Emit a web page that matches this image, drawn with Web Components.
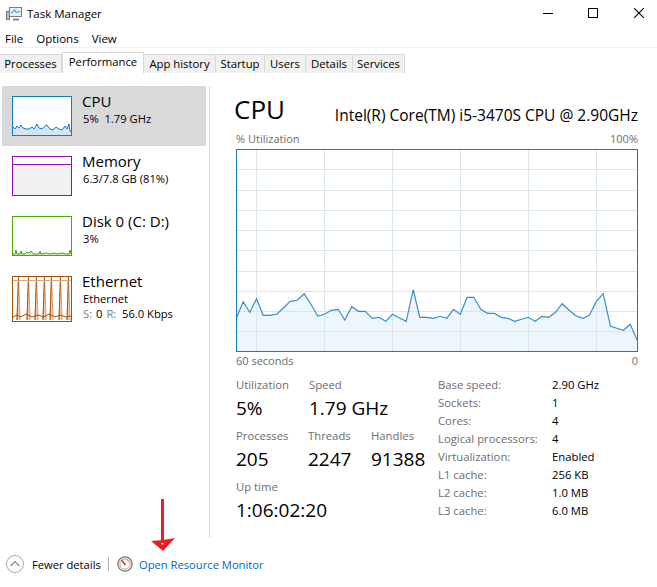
<!DOCTYPE html>
<html>
<head>
<meta charset="utf-8">
<title>Task Manager</title>
<style>
  html, body { margin: 0; background: #fff; }
  body { font-family: "Open Sans", "Noto Sans", sans-serif; font-size: 12px; color: #000; }
</style>
</head>
<body>
<task-manager></task-manager>
<script>
class TitleBar extends HTMLElement {
  constructor() {
    super();
    this.attachShadow({ mode: "open" });
    this.shadowRoot.innerHTML = `
      <style>
        :host { display: flex; align-items: center; height: 30px; padding-left: 6px; }
        svg { display: block; }
        .title { margin-left: 5px; font-size: 11.5px; flex: 1; margin-top: -4px; }
        .btns { display: flex; align-self: flex-start; gap: 36px; padding-right: 13px; }
        .btn { width: 10px; height: 26px; display: flex; align-items: center; justify-content: center; }
        .btn:first-child { margin-right: -1px; }
        .app { margin-top: -2px; }
      </style>
      <svg class="app" width="16" height="16" viewBox="0 0 16 16">
        <rect x="0.5" y="5.5" width="3" height="8" fill="#bcbcbc" stroke="#777"/>
        <rect x="3.5" y="1.5" width="12" height="9" fill="#e4f0f8" stroke="#70808c"/>
        <path d="M5 7l2-1 1.5-2.5L10.5 7l1.5-1.5L14 6" fill="none" stroke="#2f8fc8"/>
        <path d="M7 13.5h6" stroke="#888" stroke-width="2"/>
      </svg>
      <div class="title">Task Manager</div>
      <div class="btns">
        <div class="btn"><svg width="10" height="10"><path d="M0 5.5h10" stroke="#000"/></svg></div>
        <div class="btn"><svg width="10" height="10"><rect x="0.5" y="0.5" width="9" height="9" fill="none" stroke="#000"/></svg></div>
        <div class="btn"><svg width="10" height="10"><path d="M0 0l10 10M10 0L0 10" stroke="#000" stroke-width="1.1"/></svg></div>
      </div>
    `;
  }
}

class MenuBar extends HTMLElement {
  constructor() {
    super();
    this.attachShadow({ mode: "open" });
    this.shadowRoot.innerHTML = `
      <style>
        :host { display: flex; height: 17px; padding-left: 5px; gap: 13px; line-height: 17px; font-size: 11.5px; border-bottom: 1px solid #f0f0f0; }
      </style>
      <span>File</span><span>Options</span><span>View</span>
    `;
  }
}

class TabStrip extends HTMLElement {
  constructor() {
    super();
    this.attachShadow({ mode: "open" });
    const tabs = [
      ["Processes", 62], ["Performance", 82], ["App history", 72], ["Startup", 49],
      ["Users", 41], ["Details", 47], ["Services", 52],
    ];
    const html = tabs.map(([name, w]) =>
      `<div class="tab${name === "Performance" ? " on" : ""}" style="width:${w}px">${name}</div>`).join("");
    this.shadowRoot.innerHTML = `
      <style>
        :host { display: flex; align-items: flex-end; height: 25px; }
        .tab { box-sizing: border-box; height: 19px; line-height: 17px; text-align: center; background: #f0f0f0; border: 1px solid #d9d9d9; border-left: 0; border-bottom: 0; font-size: 11.3px; }
        .tab.on { background: #fff; height: 21px; line-height: 18px; border-left: 1px solid #d9d9d9; }
      </style>
      ${html}
    `;
  }
}

class PerfItem extends HTMLElement {
  constructor() {
    super();
    this.attachShadow({ mode: "open" });
    this.shadowRoot.innerHTML = `
      <style>
        :host { display: flex; box-sizing: border-box; height: 60px; padding: 10px 0 0 10px; gap: 10px; }
        :host([selected]) { background: #d9d9d9; }
        .text { margin-top: -4px; }
        .name { font-size: 15px; line-height: 18px; }
        .sub { font-size: 11.2px; line-height: 15px; margin-top: 1px; padding-left: 1px; }
      </style>
      <slot name="thumb"></slot>
      <div class="text">
        <div class="name"><slot name="name"></slot></div>
        <div class="sub"><slot></slot></div>
      </div>
    `;
  }
}

class SparkThumb extends HTMLElement {
  constructor() {
    super();
    this.attachShadow({ mode: "open" });
  }
  connectedCallback() {
    const color = this.getAttribute("color");
    const h = Number(this.getAttribute("h") || 40);
    const pts = this.getAttribute("points") || "";
    const fill = this.getAttribute("fill") || "#fff";
    const shade = this.getAttribute("shade") || "none";
    const extra = this.getAttribute("extra") || "";
    const area = pts ? `<polygon points="0,${h} ${pts} 60,${h}" fill="${shade}"/><polyline points="${pts}" fill="none" stroke="${color}" stroke-width="1"/>` : "";
    this.shadowRoot.innerHTML = `
      <style>
        :host { display: block; width: 60px; height: ${h}px; flex: none; }
        svg { display: block; }
      </style>
      <svg width="60" height="${h}">
        <rect x="0" y="0" width="60" height="${h}" fill="${fill}"/>
        ${area}
        ${extra}
        <rect x="0.5" y="0.5" width="59" height="${h - 1}" fill="none" stroke="${color}"/>
      </svg>
    `;
  }
}

class CpuChart extends HTMLElement {
  constructor() {
    super();
    this.attachShadow({ mode: "open" });
    // sampled off the usage curve, in page pixels from the chart's top left
    const raw = [35,113,55,65,75,97,95,56,115,106,135,106,156,103,176,83,196,64,217,61,238,41,258,72,279,108,299,103,319,91,340,88,360,120,381,80,401,94,421,94,442,115,462,112,483,124,503,103,523,113,544,124,565,29,585,112,605,112,626,115,646,109,666,115,686,88,706,103,727,52,747,52,768,88,788,100,808,100,829,112,849,115,870,124,890,118,910,112,931,124,951,109,972,112,992,97,1012,71,1033,91,1053,107,1074,115,1094,105,1114,65,1135,41,1157,139,1176,145,1196,151,1216,133,1237,181];
    const pts = [];
    for (let i = 0; i < raw.length; i += 2) {
      pts.push(((raw[i] - 35) / 3 + 0.5).toFixed(1) + "," + ((raw[i + 1]) / 3 + 280 - 149).toFixed(1));
    }
    let grid = "";
    for (let x = 20; x < 402; x += 68) grid += `<path d="M${x + 0.5} 0V203"/>`;
    for (let i = 1; i < 10; i++) {
      const y = Math.round(i * 20.27);
      grid += `<path d="M0 ${y + 0.5}H402"/>`;
    }
    this.shadowRoot.innerHTML = `
      <style>
        :host { display: block; width: 402px; height: 203px; }
        svg { display: block; }
      </style>
      <svg width="402" height="203">
        <g stroke="#d9e6f0" fill="none">${grid}</g>
        <polygon points="0,203 ${pts.join(" ")} 402,203" fill="#cfe3f3" fill-opacity="0.35"/>
        <polyline points="${pts.join(" ")}" fill="none" stroke="#3a8fc4" stroke-width="1.2"/>
        <rect x="0.5" y="0.5" width="401" height="202" fill="none" stroke="#117dbb"/>
      </svg>
    `;
  }
}

class StatBlock extends HTMLElement {
  constructor() {
    super();
    this.attachShadow({ mode: "open" });
    this.shadowRoot.innerHTML = `
      <style>
        :host { display: block; }
        .label { color: #6d6d6d; font-size: 11.3px; line-height: 16px; }
        .value { font-size: 19px; line-height: 30px; color: #000; white-space: nowrap; }
      </style>
      <div class="label">${this.getAttribute("label")}</div>
      <div class="value">${this.getAttribute("value")}</div>
    `;
  }
}

class SpecTable extends HTMLElement {
  constructor() {
    super();
    this.attachShadow({ mode: "open" });
    const rows = [
      ["Base speed:", "2.90 GHz"], ["Sockets:", "1"], ["Cores:", "4"], ["Logical processors:", "4"],
      ["Virtualization:", "Enabled"], ["L1 cache:", "256 KB"], ["L2 cache:", "1.0 MB"], ["L3 cache:", "6.0 MB"],
    ];
    this.shadowRoot.innerHTML = `
      <style>
        :host { display: grid; grid-template-columns: 114px auto; grid-auto-rows: 18px; line-height: 18px; font-size: 11.3px; }
        .k { color: #6d6d6d; white-space: nowrap; }
      </style>
      ${rows.map(([k, v]) => `<div class="k">${k}</div><div>${v}</div>`).join("")}
    `;
  }
}

class CpuPanel extends HTMLElement {
  constructor() {
    super();
    this.attachShadow({ mode: "open" });
    this.shadowRoot.innerHTML = `
      <style>
        :host { display: block; padding: 6px 19px 0 26px; width: 402px; }
        .head { display: flex; justify-content: space-between; align-items: flex-end; height: 38px; }
        .big { font-size: 26px; line-height: 38px; margin: 0 0 2px -2px; }
        .model { font-size: 15.5px; line-height: 22px; margin-bottom: 4px; white-space: nowrap; }
        .axis { display: flex; justify-content: space-between; color: #6d6d6d; font-size: 11px; height: 16px; line-height: 16px; }
        .head + .axis { margin-top: 1px; margin-bottom: 2px; }
        .axis.low { margin-top: 1px; margin-bottom: -1px; }
        .stats { display: flex; margin-top: 9px; }
        .left { width: 202px; flex: none; display: flex; flex-direction: column; gap: 5px; }
        .row { display: flex; }
        .row stat-block:nth-child(1) { width: 72px; }
        .row.first stat-block:nth-child(1) { width: 73px; }
        .row stat-block:nth-child(2) { width: 63px; }
        spec-table { margin-top: -1px; }
      </style>
      <div class="head"><div class="big">CPU</div><div class="model">Intel(R) Core(TM) i5-3470S CPU @ 2.90GHz</div></div>
      <div class="axis"><span>% Utilization</span><span>100%</span></div>
      <cpu-chart></cpu-chart>
      <div class="axis low"><span>60 seconds</span><span>0</span></div>
      <div class="stats">
        <div class="left">
          <div class="row first"><stat-block label="Utilization" value="5%"></stat-block><stat-block label="Speed" value="1.79 GHz"></stat-block></div>
          <div class="row"><stat-block label="Processes" value="205"></stat-block><stat-block label="Threads" value="2247"></stat-block><stat-block label="Handles" value="91388"></stat-block></div>
          <div class="row"><stat-block label="Up time" value="1:06:02:20"></stat-block></div>
        </div>
        <spec-table></spec-table>
      </div>
    `;
  }
}

class FooterBar extends HTMLElement {
  constructor() {
    super();
    this.attachShadow({ mode: "open" });
    this.shadowRoot.innerHTML = `
      <style>
        :host { display: flex; align-items: center; height: 28px; padding-left: 6px; font-size: 11.2px; }
        svg { display: block; flex: none; }
        .sep { width: 1px; height: 14px; background: #b4b4b4; margin: 0 8px; }
        a { color: #0066cc; text-decoration: none; margin-left: 6px; }
        .fewer { margin-left: 8px; width: 68px; white-space: nowrap; }
      </style>
      <svg width="18" height="18" viewBox="0 0 18 18">
        <circle cx="9" cy="9" r="8.5" fill="#fff" stroke="#a8a8a8"/>
        <path d="M4.5 11L9 6.5l4.5 4.5" fill="none" stroke="#8a8a8a" stroke-width="1.2"/>
      </svg>
      <span class="fewer">Fewer details</span>
      <div class="sep"></div>
      <svg width="16" height="16" viewBox="0 0 16 16">
        <circle cx="8" cy="8" r="7.2" fill="#e8e8e0" stroke="#77776f" stroke-width="1.2"/>
        <circle cx="8" cy="8" r="5" fill="#fff" stroke="#a8a8a0" stroke-width="0.8"/>
        <path d="M4.5 4l4 5" stroke="#c8281e" stroke-width="1.4"/>
        <path d="M9 3.5a5 5 0 0 1 3.8 3" fill="none" stroke="#d88" stroke-width="1"/>
      </svg>
      <a>Open Resource Monitor</a>
    `;
  }
}

class TaskManager extends HTMLElement {
  constructor() {
    super();
    this.attachShadow({ mode: "open" });
    const cpuPts = "1,31 3,33 5,30 7,32 9,29 11,32 14,33 17,33 20,31 22,33 25,28 27,32 30,33 33,30 35,29 38,33 41,34 44,31 47,33 50,34 53,30 55,33 57,28 58,35 59,36";
    const diskPts = "1,38 3,38 4,34 5,38 8,38 9,35 10,38 13,38 15,36 17,37 19,35 21,38 27,38 28,35 29,38 35,37 38,38 42,37 45,38 50,37 54,38 57,38 58,34 59,38";
    let eth = "";
    [5, 15, 23, 31, 38, 47, 55].forEach(x => {
      eth += `<path d="M${x} 44 L${x + 1.5} 0 L${x + 3} 44" fill="#efd3bd" stroke="#cf9b72" stroke-width="1"/>`;
      eth += `<path d="M${x} 44 L${x + 1.5} 0" stroke="#a74f01" stroke-width="0.9"/>`;
    });
    eth += `<path d="M0 4.5H60" stroke="#d2a688"/><path d="M1 41l4-2 4 2 5-3 6 3 6-2 6 2 5-3 6 3 5-2 6 2 5-1" fill="none" stroke="#a74f01"/>`;
    this.shadowRoot.innerHTML = `
      <style>
        :host { display: block; position: relative; width: 657px; height: 587px; overflow: hidden; }
        .main { display: flex; margin-top: 13px; height: 452px; }
        .side { width: 204px; margin-left: 2px; flex: none; }
        .rule { width: 1px; background: #d9d9d9; margin-left: 3px; flex: none; }
        cpu-panel { flex: none; }
        footer-bar { margin-top: 12px; }
        .arrow { position: absolute; left: 150px; top: 499px; }
        perf-item.tall { height: 66px; }
        .dim { color: #6d7f99; }
        .dim.s { margin-right: 4px; }
        .dim.r { margin-left: 1px; }
      </style>
      <title-bar></title-bar>
      <menu-bar></menu-bar>
      <tab-strip></tab-strip>
      <div class="main">
        <div class="side">
          <perf-item selected>
            <spark-thumb slot="thumb" color="#117dbb" shade="#d6e5f1" points="${cpuPts}"></spark-thumb>
            <span slot="name">CPU</span>5%&nbsp; 1.79 GHz
          </perf-item>
          <perf-item>
            <spark-thumb slot="thumb" color="#8b12ae" fill="#f3f0f4" extra='<rect x="0" y="0" width="60" height="8" fill="#fff"/><path d="M0 8.5H60" stroke="#8b12ae"/>'></spark-thumb>
            <span slot="name">Memory</span>6.3/7.8 GB (81%)
          </perf-item>
          <perf-item>
            <spark-thumb slot="thumb" color="#4da60c" shade="#d5ecc0" points="${diskPts}"></spark-thumb>
            <span slot="name">Disk 0 (C: D:)</span>3%
          </perf-item>
          <perf-item class="tall">
            <spark-thumb slot="thumb" h="46" color="#a74f01" extra='${eth}'></spark-thumb>
            <span slot="name">Ethernet</span>Ethernet<br><span class="dim s">S:</span>0 <span class="dim r">R:</span>&nbsp; 56.0 Kbps
          </perf-item>
        </div>
        <div class="rule"></div>
        <cpu-panel></cpu-panel>
      </div>
      <footer-bar></footer-bar>
      <svg class="arrow" width="26" height="54" viewBox="0 0 26 54">
        <path d="M12.5 1V42" stroke="#ed1c24" stroke-width="3" stroke-linecap="round"/>
        <path d="M1 42 L13 52 L25 39 L13 41 Z" fill="#ed1c24"/>
        <path d="M11 44h3l-1.500 2z" fill="#fff"/>
      </svg>
    `;
  }
}

customElements.define("title-bar", TitleBar);
customElements.define("menu-bar", MenuBar);
customElements.define("tab-strip", TabStrip);
customElements.define("perf-item", PerfItem);
customElements.define("spark-thumb", SparkThumb);
customElements.define("cpu-chart", CpuChart);
customElements.define("stat-block", StatBlock);
customElements.define("spec-table", SpecTable);
customElements.define("cpu-panel", CpuPanel);
customElements.define("footer-bar", FooterBar);
customElements.define("task-manager", TaskManager);
</script>
</body>
</html>
